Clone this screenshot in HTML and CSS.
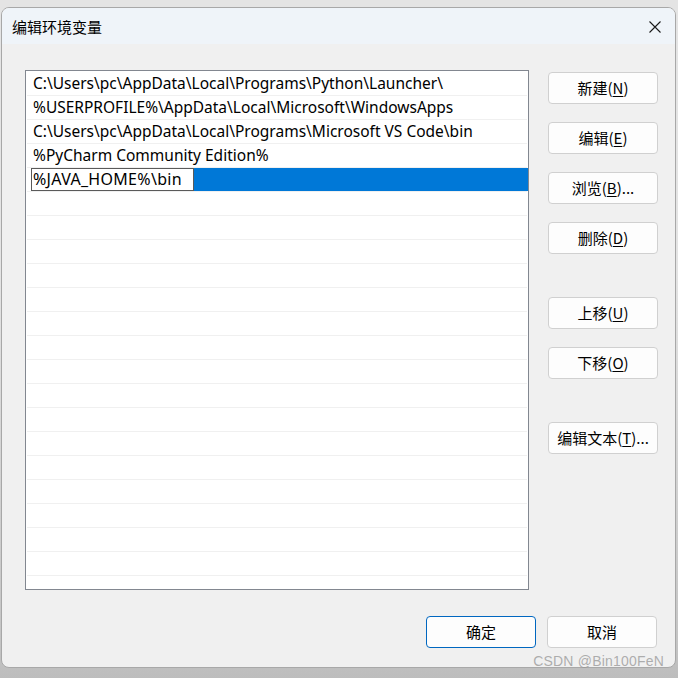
FILE: index.html
```html
<!DOCTYPE html>
<html lang="zh-CN">
<head>
<meta charset="utf-8">
<title>编辑环境变量</title>
<link rel="stylesheet" href="styles.css">
</head>
<body>
<div class="window">
  <div class="titlebar">
    <span class="title">编辑环境变量</span>
    <button class="close" aria-label="关闭">
      <svg width="12" height="12" viewBox="0 0 12 12"><path d="M0.5 0.5 L11.5 11.5 M11.5 0.5 L0.5 11.5" stroke="#1a1a1a" stroke-width="1.1" fill="none"/></svg>
    </button>
  </div>
  <div class="content">
    <div class="main">
      <div class="list">
        <div class="row">C:\Users\pc\AppData\Local\Programs\Python\Launcher\</div>
        <div class="row">%USERPROFILE%\AppData\Local\Microsoft\WindowsApps</div>
        <div class="row">C:\Users\pc\AppData\Local\Programs\Microsoft VS Code\bin</div>
        <div class="row">%PyCharm Community Edition%</div>
        <div class="row selected"><span class="editbox">%JAVA_HOME%\bin</span><span class="fill"></span></div>
        <div class="row"></div><div class="row"></div><div class="row"></div><div class="row"></div>
        <div class="row"></div><div class="row"></div><div class="row"></div><div class="row"></div>
        <div class="row"></div><div class="row"></div><div class="row"></div><div class="row"></div>
        <div class="row"></div><div class="row"></div><div class="row"></div><div class="row"></div>
        <div class="row"></div>
      </div>
      <div class="side">
        <div class="group">
          <button class="btn">新建(<u>N</u>)</button>
          <button class="btn">编辑(<u>E</u>)</button>
          <button class="btn">浏览(<u>B</u>)...</button>
          <button class="btn">删除(<u>D</u>)</button>
        </div>
        <div class="group">
          <button class="btn">上移(<u>U</u>)</button>
          <button class="btn">下移(<u>O</u>)</button>
        </div>
        <div class="group">
          <button class="btn">编辑文本(<u>T</u>)...</button>
        </div>
      </div>
    </div>
    <div class="footer">
      <button class="btn primary">确定</button>
      <button class="btn">取消</button>
    </div>
  </div>
</div>
<div class="watermark">CSDN @Bin100FeN</div>
</body>
</html>
```
FILE: styles.css
```css
html, body {
  margin: 0;
  padding: 0;
}
body {
  width: 678px;
  height: 678px;
  overflow: hidden;
  background: linear-gradient(#e4e4e4 0, #e4e4e4 40%, #c4c4c4 95%, #bdbdbd 100%);
  font-family: "Noto Sans", "Noto Sans CJK SC", sans-serif;
  color: #000;
  position: relative;
}
.window {
  margin: 7px 0 0 1px;
  width: 675px;
  height: 661px;
  border: 1px solid #a8a8a8;
  border-radius: 8px;
  overflow: hidden;
  display: flex;
  flex-direction: column;
  background: #f0f0f0;
  box-sizing: border-box;
}
.titlebar {
  height: 36px;
  background: #eff4f9;
  display: flex;
  align-items: center;
  padding: 0 14px 0 10px;
  flex: none;
}
.title {
  font-family: "Noto Sans CJK SC", sans-serif;
  font-size: 15px;
  flex: 1;
  margin-top: 1px;
}
.close {
  border: 0;
  background: none;
  padding: 0;
  width: 12px;
  height: 12px;
  display: flex;
  margin-top: 2px;
}
.content {
  flex: 1;
  display: flex;
  flex-direction: column;
  padding: 26px 18px 0 23px;
}
.main {
  display: flex;
  gap: 19px;
}
.list {
  width: 504px;
  height: 520px;
  box-sizing: border-box;
  border: 1px solid #828790;
  background: #fff;
  padding: 1px 1px 0 1px;
  overflow: hidden;
  flex: none;
}
.row {
  height: 23px;
  border-bottom: 1px solid #f0f0f0;
  font-size: 15.5px;
  line-height: 23px;
  padding-left: 6px;
  white-space: nowrap;
}
.row.selected {
  display: flex;
  padding-left: 4px;
}
.editbox {
  width: 160px;
  height: 21px;
  border: 1px solid #5a5a5a;
  line-height: 21px;
  padding-left: 1px;
  flex: none;
  background: #fff;
  font-size: 16px;
  letter-spacing: 0.3px;
}
.fill {
  flex: 1;
  background: #0078d7;
  margin-right: -1px;
}
.side {
  display: flex;
  flex-direction: column;
  padding-top: 2px;
  gap: 43px;
}
.group {
  display: flex;
  flex-direction: column;
  gap: 18px;
}
.btn {
  width: 110px;
  height: 32px;
  box-sizing: border-box;
  border: 1px solid #d0d0d0;
  border-radius: 4px;
  background: #fdfdfd;
  font-family: "Noto Sans CJK SC", sans-serif;
  font-size: 15px;
  color: #000;
  padding: 0 0 1px 0;
  display: flex;
  align-items: center;
  justify-content: center;
}
.btn u {
  text-decoration-thickness: 1px;
  text-underline-offset: 2px;
}
.btn.primary {
  border-color: #0067c0;
}
.footer {
  display: flex;
  justify-content: flex-end;
  gap: 11px;
  margin-top: 26px;
}
.watermark {
  position: absolute;
  right: 14px;
  bottom: 9px;
  font-family: "Liberation Sans", sans-serif;
  font-size: 14px;
  color: rgba(150, 150, 150, 0.75);
  letter-spacing: 0.2px;
}
```
